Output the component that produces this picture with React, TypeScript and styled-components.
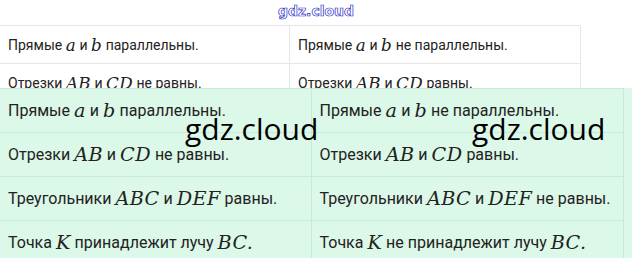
import React from 'react';
import styled, { createGlobalStyle } from 'styled-components';

const GlobalStyle = createGlobalStyle`
  body {
    margin: 0;
    background: #ffffff;
    font-family: Roboto, "Liberation Sans", sans-serif;
    color: #222;
  }
`;

const Page = styled.div`
  width: 632px;
  height: 258px;
  overflow: hidden;
  display: flex;
  flex-direction: column;
`;

const Header = styled.div`
  flex-shrink: 0;
  height: 25px;
  display: flex;
  justify-content: center;
  align-items: flex-start;
`;

const Logo = styled.span`
  font-family: "DejaVu Sans", sans-serif;
  font-weight: bold;
  font-size: 14px;
  line-height: 22px;
  color: #ffffff;
  -webkit-text-stroke: 0.7px #2c2cc8;
`;

const TopClip = styled.div`
  flex-shrink: 0;
  height: 63px;
  overflow: hidden;
`;

const Table = styled.div<{ $width: number; $line: string }>`
  width: ${(p) => p.$width}px;
  display: grid;
  grid-template-columns: 1fr 1fr;
  border-top: 1px solid ${(p) => p.$line};
  border-right: 1px solid ${(p) => p.$line};
`;

const Cell = styled.div<{ $h: number; $size: number; $line: string; $first: boolean }>`
  height: ${(p) => p.$h}px;
  display: flex;
  align-items: center;
  padding-left: 8px;
  font-size: ${(p) => p.$size}px;
  white-space: pre;
  border-bottom: 1px solid ${(p) => p.$line};
  border-right: ${(p) => (p.$first ? `1px solid ${p.$line}` : 'none')};
`;

const M = styled.span`
  font-family: "DejaVu Serif", "Liberation Serif", serif;
  font-style: italic;
  font-size: 1.2em;
  letter-spacing: 0.02em;
`;

const Green = styled.div`
  position: relative;
  flex: 1;
  min-height: 0;
  overflow: hidden;
  background: #dcf8e8;
`;

const Watermark = styled.span<{ $left: number }>`
  position: absolute;
  top: 26px;
  left: ${(p) => p.$left}px;
  font-family: "Open Sans", sans-serif;
  font-size: 30px;
  line-height: 30px;
  color: #000;
`;

const rows: [React.ReactNode, React.ReactNode][] = [
  [
    <>Прямые <M>a</M> и <M>b</M> параллельны.</>,
    <>Прямые <M>a</M> и <M>b</M> не параллельны.</>,
  ],
  [
    <>Отрезки <M>AB</M> и <M>CD</M> не равны.</>,
    <>Отрезки <M>AB</M> и <M>CD</M> равны.</>,
  ],
  [
    <>Треугольники <M>ABC</M> и <M>DEF</M> равны.</>,
    <>Треугольники <M>ABC</M> и <M>DEF</M> не равны.</>,
  ],
  [
    <>Точка <M>K</M> принадлежит лучу <M>BC.</M></>,
    <>Точка <M>K</M> не принадлежит лучу <M>BC.</M></>,
  ],
];

function Grid({ count, width, h, size, line }: { count: number; width: number; h: number; size: number; line: string }) {
  return (
    <Table $width={width} $line={line}>
      {rows.slice(0, count).map((r, i) => (
        <React.Fragment key={i}>
          <Cell $h={h} $size={size} $line={line} $first>{r[0]}</Cell>
          <Cell $h={h} $size={size} $line={line} $first={false}>{r[1]}</Cell>
        </React.Fragment>
      ))}
    </Table>
  );
}

export default function App() {
  return (
    <Page>
      <GlobalStyle />
      <Header>
        <Logo>gdz.cloud</Logo>
      </Header>
      <TopClip>
        <Grid count={2} width={580} h={37} size={14} line="#e6e6e6" />
      </TopClip>
      <Green>
        <Grid count={4} width={623} h={43} size={16} line="#c9ead7" />
        <Watermark $left={185}>gdz.cloud</Watermark>
        <Watermark $left={472}>gdz.cloud</Watermark>
      </Green>
    </Page>
  );
}
